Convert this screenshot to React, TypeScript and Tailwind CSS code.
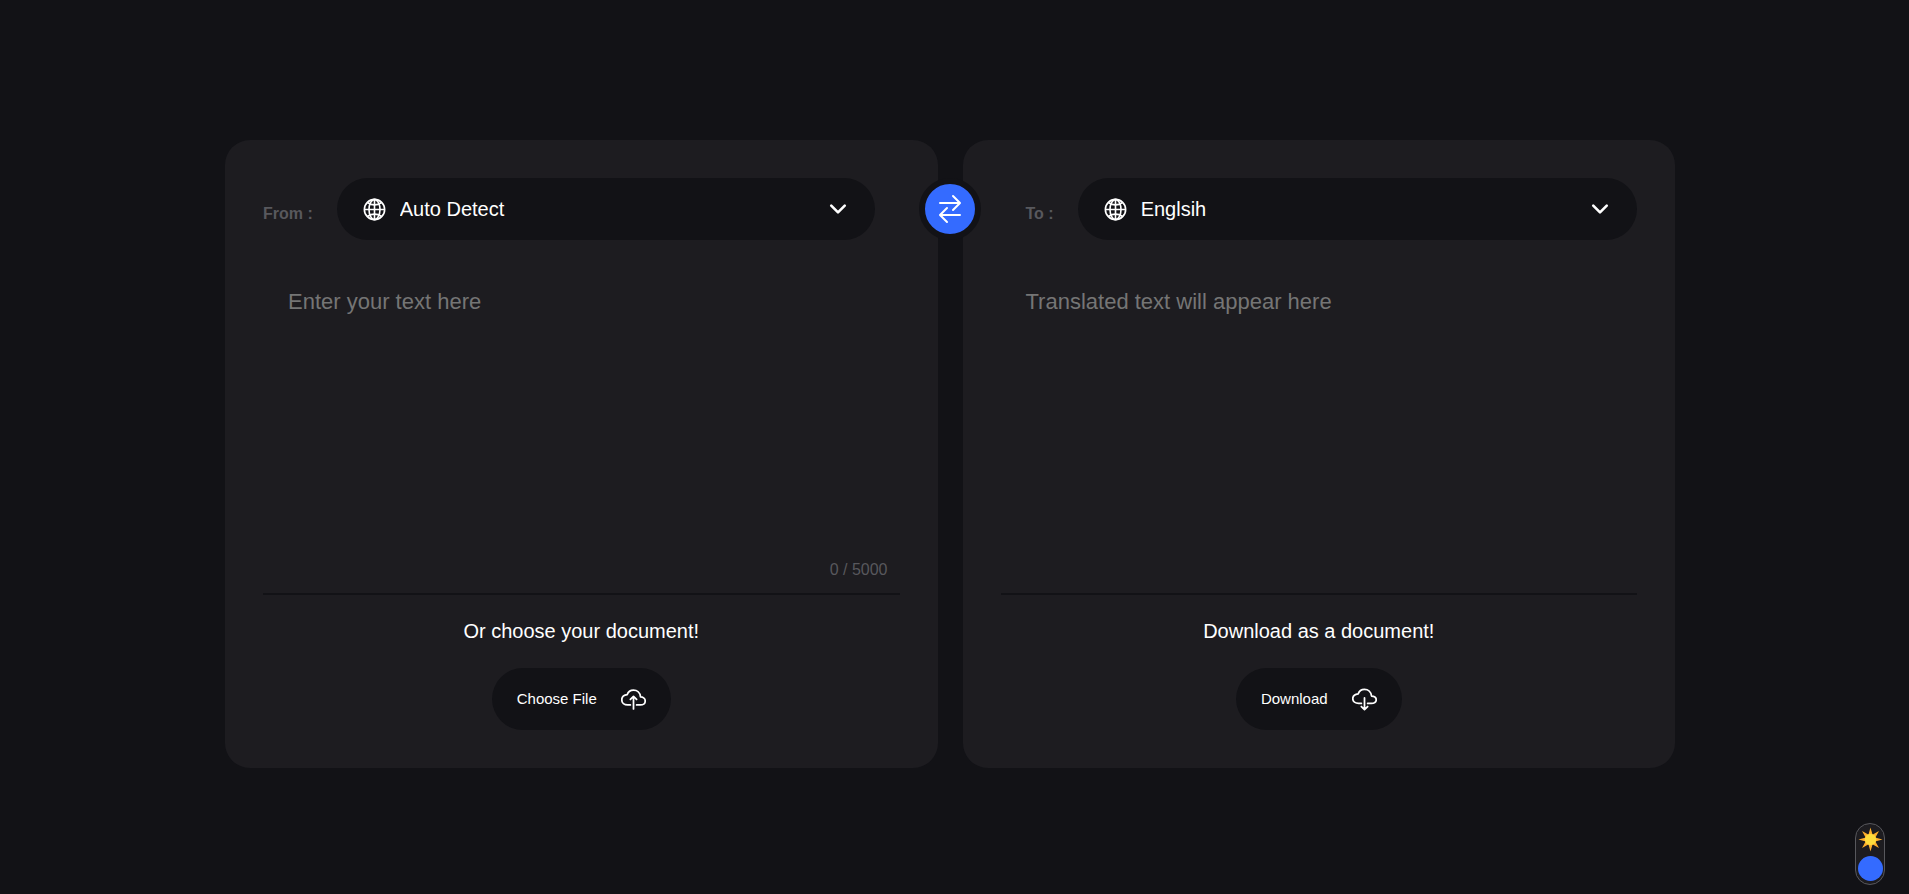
import { useState } from "react";
import {
  IoChevronDownOutline,
  IoCloudDownloadOutline,
  IoCloudUploadOutline,
  IoGlobeOutline,
  IoSwapHorizontalOutline,
} from "react-icons/io5";

type LanguageSelectProps = { id: string; label: string; options: string[] };

function LanguageSelect({ id, label, options }: LanguageSelectProps) {
  return (
    <div className="flex items-center gap-6">
      <label htmlFor={id} className="pt-[10px] font-bold text-[#58585d]">
        {label}
      </label>
      <div className="relative flex-1">
        <select
          id={id}
          className="h-[62px] w-full appearance-none rounded-full bg-[#121216] pr-16 pl-[63px] text-xl text-white"
        >
          {options.map((option) => (
            <option key={option}>{option}</option>
          ))}
        </select>
        <IoGlobeOutline className="pointer-events-none absolute top-[19px] left-[25px] size-[25px] text-white [&_path]:[stroke-width:33px]" />
        <IoChevronDownOutline className="pointer-events-none absolute top-[19px] right-[25px] size-6 text-white [&_path]:[stroke-width:56px]" />
      </div>
    </div>
  );
}

function SunIcon() {
  return (
    <svg viewBox="0 0 48 48" className="size-[25px]" aria-hidden="true">
      <g fill="#ffae2b">
        {[0, 45, 90, 135, 180, 225, 270, 315].map((angle) => (
          <path key={angle} d="M24 1 L28 15 H20 Z" transform={`rotate(${angle} 24 24)`} />
        ))}
      </g>
      <circle cx="24" cy="24" r="11" fill="#ffdc3c" />
    </svg>
  );
}

export default function App() {
  const [text, setText] = useState("");

  return (
    <div className="flex min-h-screen flex-col bg-[#121216] px-3 pt-[140px] font-['Liberation_Sans',Arial,sans-serif] text-base text-white">
      <main className="mx-auto w-full max-w-[1459px] pr-[9px]">
        <div className="relative grid grid-cols-2 gap-[25px]">
          <section className="flex flex-col rounded-[25px] bg-[#1d1c20] p-[38px]">
            <div className="pr-[25px]">
              <LanguageSelect
                id="from"
                label="From :"
                options={["Auto Detect", "English", "French", "German"]}
              />
            </div>
            <div className="mt-[25px] flex h-[330px] flex-col border-b-2 border-[#121216]">
              <textarea
                aria-label="Text to translate"
                placeholder="Enter your text here"
                maxLength={5000}
                value={text}
                onChange={(event) => setText(event.target.value)}
                className="flex-1 resize-none bg-transparent px-[25px] py-6 text-[22px] leading-[26px] outline-none placeholder:text-[#757575]"
              />
              <p className="pr-3 pb-[11px] text-right text-[#58585d]">{text.length} / 5000</p>
            </div>
            <div className="flex flex-col items-center gap-[25px] pt-6">
              <p className="text-xl leading-6">Or choose your document!</p>
              <button
                type="button"
                className="flex h-[62px] items-center gap-6 rounded-full bg-[#121216] px-[25px] text-[15px]"
              >
                Choose File
                <IoCloudUploadOutline className="size-[25px] [&_path]:[stroke-width:36px]" />
              </button>
            </div>
          </section>

          <button
            type="button"
            aria-label="Swap languages"
            className="absolute top-[38px] left-1/2 flex size-[62px] -translate-x-1/2 items-center justify-center rounded-full border-6 border-[#121216] bg-[#346bff]"
          >
            <IoSwapHorizontalOutline className="size-8" />
          </button>

          <section className="flex flex-col rounded-[25px] bg-[#1d1c20] p-[38px]">
            <div className="pl-[25px]">
              <LanguageSelect
                id="to"
                label="To :"
                options={["Englsih", "French", "German", "Spanish"]}
              />
            </div>
            <div className="mt-[25px] flex h-[330px] flex-col border-b-2 border-[#121216]">
              <textarea
                aria-label="Translation"
                placeholder="Translated text will appear here"
                readOnly
                className="flex-1 resize-none bg-transparent px-[25px] py-6 text-[22px] leading-[26px] outline-none placeholder:text-[#757575]"
              />
            </div>
            <div className="flex flex-col items-center gap-[25px] pt-6">
              <p className="text-xl leading-6">Download as a document!</p>
              <button
                type="button"
                className="flex h-[62px] items-center gap-6 rounded-full bg-[#121216] px-[25px] text-[15px]"
              >
                Download
                <IoCloudDownloadOutline className="size-[25px] [&_path]:[stroke-width:36px]" />
              </button>
            </div>
          </section>
        </div>
      </main>

      <button
        type="button"
        aria-label="Toggle theme"
        className="fixed right-6 bottom-[9px] flex h-[62px] w-[30px] flex-col items-center justify-between rounded-full border border-[#58585d] bg-[#1d1c20] pt-[3px] pb-[3px]"
      >
        <SunIcon />
        <span className="size-[25px] rounded-full bg-[#346bff]" />
      </button>
    </div>
  );
}
